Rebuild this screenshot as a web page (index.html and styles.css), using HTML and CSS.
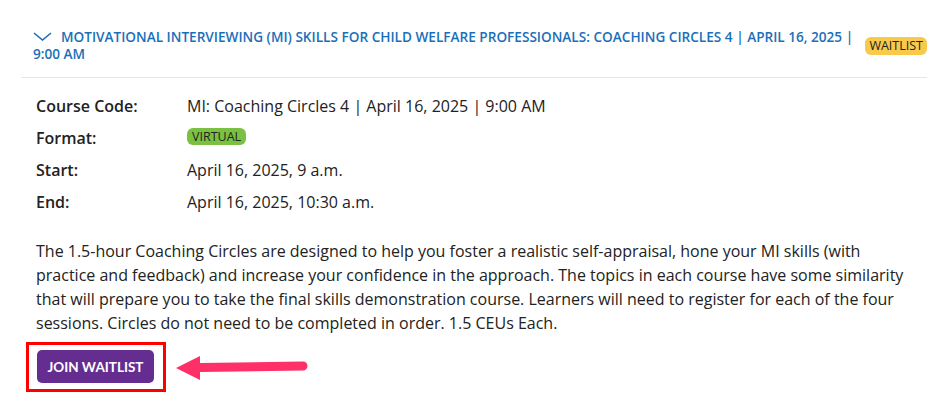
FILE: index.html
```html
<!DOCTYPE html>
<html lang="en">
<head>
<meta charset="utf-8">
<title>Course</title>
<link rel="stylesheet" href="styles.css">
</head>
<body>
<div class="card">
  <div class="header">
    <div class="title">
      <svg class="chevron" width="19" height="9" viewBox="0 0 19 9"><path d="M1 1 L9.5 8 L18 1" fill="none" stroke="#1b6fb8" stroke-width="1.6"/></svg>MOTIVATIONAL INTERVIEWING (MI) SKILLS FOR CHILD WELFARE PROFESSIONALS: COACHING CIRCLES 4 | APRIL 16, 2025 | 9:00 AM
    </div>
    <span class="badge badge-wait">WAITLIST</span>
  </div>
  <div class="body">
    <div class="details">
      <div class="label">Course Code:</div><div class="value">MI: Coaching Circles 4 | April 16, 2025 | 9:00 AM</div>
      <div class="label">Format:</div><div class="value"><span class="badge badge-virtual">VIRTUAL</span></div>
      <div class="label">Start:</div><div class="value">April 16, 2025, 9 a.m.</div>
      <div class="label">End:</div><div class="value">April 16, 2025, 10:30 a.m.</div>
    </div>
    <p class="desc">The 1.5-hour Coaching Circles are designed to help you foster a realistic self-appraisal, hone your MI skills (with practice and feedback) and increase your confidence in the approach. The topics in each course have some similarity that will prepare you to take the final skills demonstration course. Learners will need to register for each of the four sessions. Circles do not need to be completed in order. 1.5 CEUs Each.</p>
    <div class="actions">
      <div class="highlight"><button class="btn">JOIN WAITLIST</button></div>
      <svg class="arrow" width="134" height="28" viewBox="0 0 134 28"><path d="M0 14 L24 2 L24 9 L127 7.5 A4.5 4.5 0 0 1 127 16.5 L24 18 L24 26 Z" fill="#ff2f68"/></svg>
    </div>
  </div>
</div>
</body>
</html>
```

FILE: styles.css
```css
html, body {
  margin: 0;
  padding: 0;
  background: #ffffff;
}
body {
  font-family: "Open Sans", "Liberation Sans", sans-serif;
  color: #222222;
}
.card {
  margin-left: 21px;
  width: 906px;
}
.header {
  display: flex;
  align-items: center;
  justify-content: space-between;
  padding: 28px 0 15px 12px;
  border-bottom: 1px solid #e6e6e6;
}
.title {
  width: 826px;
  font-size: 13.6px;
  line-height: 17px;
  font-weight: 600;
  color: #1b6fb8;
}
.chevron {
  vertical-align: 1px;
  margin-right: 9px;
}
.badge {
  display: inline-block;
  font-size: 12.5px;
  border-radius: 6px;
  color: #222222;
  font-weight: 500;
}
.badge-wait {
  background: #f8c94a;
  padding: 0 4px;
  height: 18px;
  line-height: 18px;
  margin-top: 2px;
}
.badge-virtual {
  background: #7ac142;
  padding: 0 5px;
  height: 17px;
  line-height: 17px;
  vertical-align: 3px;
}
.body {
  padding: 12px 0 0 15px;
}
.details {
  display: grid;
  grid-template-columns: 151px 1fr;
  font-size: 16px;
  line-height: 32px;
}
.label {
  font-weight: 600;
}
.desc {
  margin: 21px 0 0;
  font-size: 16px;
  line-height: 24px;
  width: 880px;
}
.actions {
  display: flex;
  align-items: center;
  margin-top: 7px;
}
.highlight {
  margin-left: -10px;
  border: 3px solid #ff0000;
  padding: 5px 9px 6px 8px;
}
.btn {
  display: block;
  width: 117px;
  height: 33px;
  border: none;
  border-radius: 5px;
  background: #662d91;
  color: #ffffff;
  font-family: Lato, "Open Sans", sans-serif;
  font-weight: 700;
  font-size: 13.5px;
  padding: 0;
}
.arrow {
  margin-left: 10px;
  margin-top: 2px;
}
```
